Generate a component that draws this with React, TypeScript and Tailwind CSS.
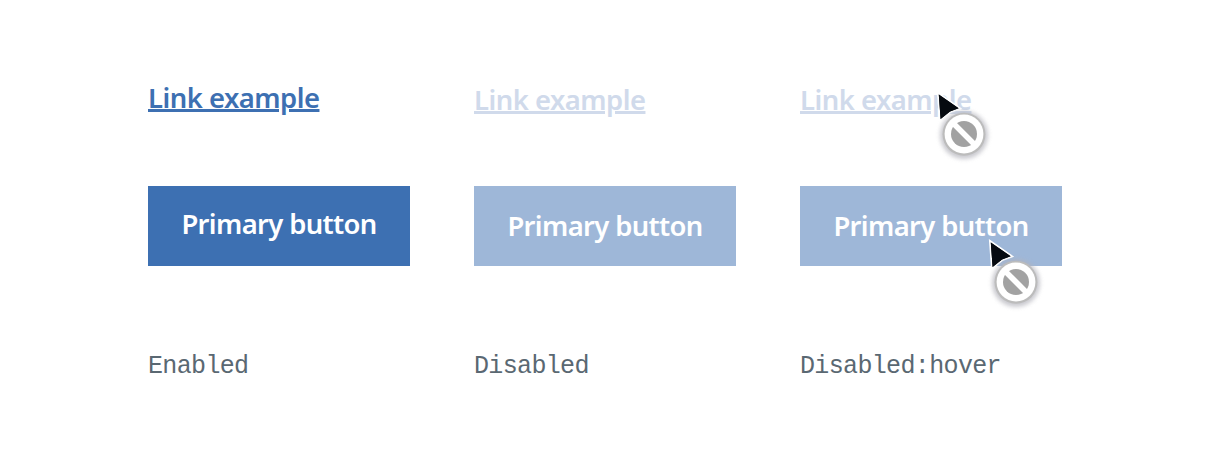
type ExampleProps = {
  state: string;
  disabled?: boolean;
  hover?: boolean;
};

function BlockedCursor({ className }: { className: string }) {
  return (
    <svg className={className} width="72" height="84" viewBox="0 0 72 84" aria-hidden="true">
      <defs>
        <filter id="halo" x="-40%" y="-40%" width="180%" height="180%">
          <feGaussianBlur stdDeviation="2.2" />
        </filter>
      </defs>
      <path d="M8.8 8.5 L28.6 22.2 L20 25.4 L10.6 33 Z" fill="#060a10" stroke="#fff" strokeWidth="3.4" paintOrder="stroke" />
      <circle cx="34" cy="49" r="24" fill="#b4b4bc" opacity="0.7" filter="url(#halo)" />
      <circle cx="34" cy="48.2" r="21.5" fill="#bcbcbc" />
      <path d="M8.8 8.5 L28.6 22.2 L20 25.4 L10.6 33 Z" fill="#060a10" />
      <circle cx="34" cy="48" r="19.4" fill="#fff" />
      <circle cx="34" cy="48" r="13" fill="#a2a2a2" />
      <path d="M23 37 L45 59" stroke="#fff" strokeWidth="5.5" />
    </svg>
  );
}

function Example({ state, disabled = false, hover = false }: ExampleProps) {
  return (
    <section className="flex w-[262px] flex-col items-start">
      <div className={`relative flex h-[106px] ${disabled ? "pt-[2px]" : ""}`}>
        <a
          aria-disabled={disabled}
          className={`h-9 w-[172px] whitespace-nowrap text-[27.4px] leading-9 font-semibold tracking-[-0.5px] underline decoration-[3px] underline-offset-[1px] ${
            disabled ? "text-[#d0daeb]" : "text-[#3d70b2]"
          }`}
        >
          Link example
        </a>
        {hover && <BlockedCursor className="absolute top-[6px] left-[130px]" />}
      </div>
      <div className="relative">
        <button
          disabled={disabled}
          className={`h-20 w-[262px] whitespace-nowrap text-[27.4px] leading-9 font-semibold tracking-[-0.63px] text-white ${
            disabled ? "bg-[#9eb7d8] pb-0" : "bg-[#3d70b2] pb-1"
          }`}
        >
          Primary button
        </button>
        {hover && <BlockedCursor className="absolute top-12 left-[182px]" />}
      </div>
      <p className="mt-[85px] font-['Liberation_Mono',monospace] text-[25px] leading-8 tracking-[-0.65px] text-[#5a6872]">
        {state}
      </p>
    </section>
  );
}

export default function App() {
  return (
    <main className="flex h-[460px] w-[1208px] items-start gap-16 overflow-hidden bg-white pt-20 pl-[148px] font-['Noto_Sans',sans-serif]">
      <Example state="Enabled" />
      <Example state="Disabled" disabled />
      <Example state="Disabled:hover" disabled hover />
    </main>
  );
}
